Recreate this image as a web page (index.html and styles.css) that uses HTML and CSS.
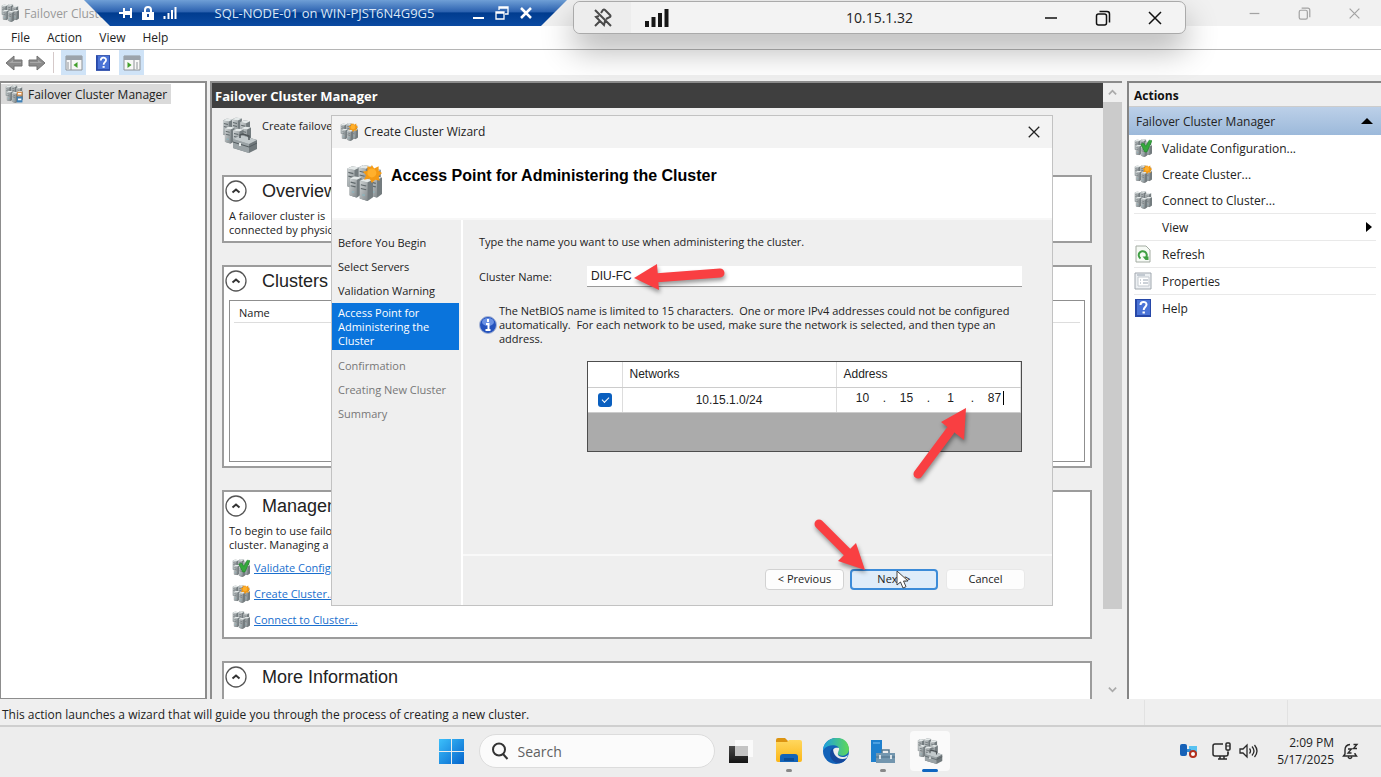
FILE: index.html
```html
<!DOCTYPE html>
<html lang="en">
<head>
    <meta charset="UTF-8">
    <meta name="viewport" content="width=device-width, initial-scale=1.0">
    <title>Failover Cluster Manager</title>
    <link rel="stylesheet" href="styles.css">
</head>
<body>

<!-- shared icons -->
<svg class="sprite" aria-hidden="true">
  <defs>
    <linearGradient id="g-metal" x1="0" y1="0" x2="1" y2="1">
      <stop offset="0" stop-color="#d0d5d6"/><stop offset="1" stop-color="#82898c"/>
    </linearGradient>
    <linearGradient id="g-win" x1="0" y1="0" x2="1" y2="1">
      <stop offset="0" stop-color="#3cc0fb"/><stop offset="1" stop-color="#0564cc"/>
    </linearGradient>
    <linearGradient id="g-folder" x1="0" y1="0" x2="0" y2="1">
      <stop offset="0" stop-color="#ffd75e"/><stop offset="1" stop-color="#fbb617"/>
    </linearGradient>
    <linearGradient id="g-edge" x1="0" y1="0" x2="1" y2="0">
      <stop offset="0" stop-color="#1b9de2"/><stop offset="1" stop-color="#5fd957"/>
    </linearGradient>
    <linearGradient id="g-black" x1="0" y1="0" x2="0" y2="1">
      <stop offset="0" stop-color="#4a4a4a"/><stop offset="1" stop-color="#141414"/>
    </linearGradient>

    <symbol id="i-server" viewBox="0 0 10 18" preserveAspectRatio="none">
      <path d="M0 2l4-2 6 1v14l-4 3-6-2z" fill="#747c7f"/>
      <path d="M0 2l6 1v15l-6-2z" fill="url(#g-metal)"/>
      <path d="M0 2l4-2 6 1-4 2z" fill="#e4e9e9"/>
      <path d="M1 5l4 1M1 8l4 1" stroke="#5f686b" stroke-width="1"/>
      <path d="M2 13l2 .5" stroke="#8fb3bb" stroke-width="1.4"/>
    </symbol>

    <symbol id="i-cluster" viewBox="0 0 32 32">
      <use href="#i-server" x="1" y="1" width="11" height="20"/>
      <use href="#i-server" x="11" y="0" width="11" height="20"/>
      <use href="#i-server" x="20" y="3" width="11" height="20"/>
      <use href="#i-server" x="3" y="10" width="11" height="19"/>
      <use href="#i-server" x="21" y="10" width="11" height="19"/>
      <use href="#i-server" x="12" y="12" width="12" height="20"/>
    </symbol>

    <symbol id="i-cluster-new" viewBox="0 0 32 32">
      <use href="#i-cluster" width="32" height="32"/>
      <path d="M23 0l2 3 4-2v4l3 2-3 3 1 4-4-1-3 3-2-4-5 1 2-4-3-3 4-1 0-4 3 1z" fill="#f49a14"/>
      <circle cx="23" cy="7" r="4" fill="#ffb02c"/>
    </symbol>

    <symbol id="i-cluster-ok" viewBox="0 0 32 32">
      <use href="#i-cluster" width="32" height="32"/>
      <path d="M12 9l5-2 4 6L27 2l5 1-9 20h-4z" fill="#35a83c" stroke="#1d7c28" stroke-width="1"/>
    </symbol>

    <symbol id="i-cluster-tree" viewBox="0 0 32 32">
      <use href="#i-cluster" width="32" height="32"/>
      <path d="M21 12h10v7H21z" fill="#d9914d"/><path d="M21 21h10v10H21z" fill="#3d7fb5"/>
      <path d="M23 14h6v3h-6zM23 24h6v3h-6z" fill="#fff"/>
    </symbol>

    <symbol id="i-cluster-tool" viewBox="0 0 36 36">
      <use href="#i-cluster" width="29" height="30"/>
      <path d="M11 22l8-4 16 5v9l-8 4-16-5z" fill="#71797c"/>
      <path d="M11 22l16 5v9l-16-5z" fill="#9ba3a6"/>
      <path d="M11 22l8-4 16 5-8 4z" fill="#c3cacc"/>
      <path d="M18 21v-3l3-1 6 2v4" fill="none" stroke="#4f5558" stroke-width="1.5"/>
      <path d="M11 25l16 5 8-4" fill="none" stroke="#555d60" stroke-width="1"/>
      <path d="M18 26v3" stroke="#e8ecec" stroke-width="2"/>
    </symbol>

    <symbol id="i-help" viewBox="0 0 16 18">
      <path d="M0 0h16v18H0z" fill="#2748a8"/><path d="M2 1h13v15H2z" fill="#4a73d6"/>
      <path d="M5.500 6c0-4 6-4 6-.5 0 2.500-2.800 2.500-2.800 5.500" fill="none" stroke="#fff" stroke-width="2"/>
      <path d="M7.500 12.500h2.400v2H7.500z" fill="#fff"/>
    </symbol>

    <symbol id="i-back" viewBox="0 0 18 16">
      <path d="M1 8l8-7v4h8v6H9v4z" fill="#8c8c8c" stroke="#737373" stroke-width="1"/>
      <path d="M4 8l4-3v2h8v1z" fill="#a9a9a9"/>
    </symbol>

    <symbol id="i-max" viewBox="0 0 16 16">
      <rect x="1.500" y="4" width="10" height="11" rx="2" fill="none" stroke="currentColor" stroke-width="1.500"/>
      <path d="M4.500 1.500H12a2.500 2.500 0 0 1 2.500 2.500v8.500" fill="none" stroke="currentColor" stroke-width="1.500"/>
    </symbol>
    <symbol id="i-min" viewBox="0 0 16 16"><path d="M2 8h12" stroke="currentColor" stroke-width="1.500"/></symbol>
    <symbol id="i-close" viewBox="0 0 16 16"><path d="M2 2l12 12M14 2L2 14" stroke="currentColor" stroke-width="1.500"/></symbol>

    <symbol id="i-chevron" viewBox="0 0 22 22">
      <circle cx="11" cy="11" r="10" fill="#fff" stroke="#555" stroke-width="1.300"/>
      <path d="M7.500 12.500L11 9.500l3.500 3" fill="none" stroke="#333" stroke-width="2"/>
    </symbol>
  </defs>
</svg>

<header class="titlebar">
  <svg class="icon18"><use href="#i-cluster"/></svg>
  <h1>Failover Cluster Manager</h1>
  <div class="win-buttons faded">
    <button type="button" aria-label="Minimize"><svg><use href="#i-min"/></svg></button>
    <button type="button" aria-label="Restore"><svg><use href="#i-max"/></svg></button>
    <button type="button" aria-label="Close"><svg><use href="#i-close"/></svg></button>
  </div>
</header>

<nav class="menubar">
  <button type="button">File</button>
  <button type="button">Action</button>
  <button type="button">View</button>
  <button type="button">Help</button>
</nav>

<div class="toolbar">
  <button type="button" aria-label="Back"><svg width="18" height="16"><use href="#i-back"/></svg></button>
  <button type="button" aria-label="Forward" class="forward"><svg width="18" height="16"><use href="#i-back"/></svg></button>
  <span class="tool-sep"></span>
  <button type="button" class="pressed" aria-label="Show tree">
    <svg width="18" height="16" viewBox="0 0 18 16"><path d="M1 1h16v14H1z" fill="#f7f7f7" stroke="#8f9499"/><path d="M1 1h16v4H1z" fill="#9ba3ab"/><path d="M6 5v10M3 7v7" stroke="#8f9499"/><path d="M12.500 7v6L8.500 10z" fill="#43a02c"/></svg>
  </button>
  <button type="button" class="help" aria-label="Help"><svg width="14" height="18"><use href="#i-help"/></svg></button>
  <button type="button" class="pressed" aria-label="Show actions">
    <svg width="18" height="16" viewBox="0 0 18 16"><path d="M1 1h16v14H1z" fill="#f7f7f7" stroke="#8f9499"/><path d="M1 1h16v4H1z" fill="#9ba3ab"/><path d="M11 5v10M14 7v7" stroke="#8f9499"/><path d="M4.500 7v6l4-3z" fill="#43a02c"/></svg>
  </button>
</div>

<main class="console">

  <aside class="tree">
    <a class="tree-item" href="#"><svg class="icon18"><use href="#i-cluster-tree"/></svg>Failover Cluster Manager</a>
  </aside>

  <section class="center">
    <div class="pane">
      <h2 class="pane-title">Failover Cluster Manager</h2>
      <div class="pane-body">
        <div class="intro">
          <svg width="36" height="36"><use href="#i-cluster-tool"/></svg>
          <p>Create failover</p>
        </div>

        <article class="box overview">
          <h3><button type="button" aria-label="Collapse"><svg><use href="#i-chevron"/></svg></button>Overview</h3>
          <p>A failover cluster is<br>connected by physical</p>
        </article>

        <article class="box clusters">
          <h3><button type="button" aria-label="Collapse"><svg><use href="#i-chevron"/></svg></button>Clusters</h3>
          <div class="list">
            <div class="list-head">Name</div>
          </div>
        </article>

        <article class="box management">
          <h3><button type="button" aria-label="Collapse"><svg><use href="#i-chevron"/></svg></button>Management</h3>
          <p>To begin to use failover<br>cluster. Managing a</p>
          <ul>
            <li><svg class="icon18"><use href="#i-cluster-ok"/></svg><a href="#">Validate Configuration...</a></li>
            <li><svg class="icon18"><use href="#i-cluster-new"/></svg><a href="#">Create Cluster...</a></li>
            <li><svg class="icon18"><use href="#i-cluster"/></svg><a href="#">Connect to Cluster...</a></li>
          </ul>
        </article>

        <article class="box more">
          <h3><button type="button" aria-label="Collapse"><svg><use href="#i-chevron"/></svg></button>More Information</h3>
        </article>
      </div>
    </div>
    <div class="scrollbar">
      <svg viewBox="0 0 10 6"><path d="M1 5l4-4 4 4" fill="none" stroke="#aaa" stroke-width="2"/></svg>
      <div class="thumb"></div>
      <svg viewBox="0 0 10 6"><path d="M1 1l4 4 4-4" fill="none" stroke="#aaa" stroke-width="2"/></svg>
    </div>
  </section>

  <aside class="actions">
    <h2>Actions</h2>
    <h3>Failover Cluster Manager <svg width="12" height="6" viewBox="0 0 12 6"><path d="M0 6l6-6 6 6z"/></svg></h3>
    <ul>
      <li><button type="button"><svg class="icon18"><use href="#i-cluster-ok"/></svg>Validate Configuration...</button></li>
      <li><button type="button"><svg class="icon18"><use href="#i-cluster-new"/></svg>Create Cluster...</button></li>
      <li><button type="button"><svg class="icon18"><use href="#i-cluster"/></svg>Connect to Cluster...</button></li>
      <li class="line"><button type="button"><span class="icon18"></span>View <svg class="more-arrow" width="6" height="10" viewBox="0 0 6 10"><path d="M0 0l6 5-6 5z"/></svg></button></li>
      <li class="line"><button type="button"><svg class="icon18" viewBox="0 0 18 18"><path d="M2 1h10l4 4v12H2z" fill="#f6faf5" stroke="#a3aba2"/><path d="M6.500 13.500A4 4 0 1 1 12 12.500" fill="none" stroke="#3f9f43" stroke-width="2"/><path d="M8.500 11.500h6v3.500h-3z" fill="#3f9f43"/></svg>Refresh</button></li>
      <li class="line"><button type="button"><svg class="icon18" viewBox="0 0 18 18"><path d="M1 1h16v16H1z" fill="#eceff2" stroke="#a0a7ae"/><path d="M4 5h11v9H4z" fill="#fff" stroke="#c3c9cf"/><path d="M3 3h8M6 8h1M9 8h5M6 11h1M9 11h5" stroke="#98a3b0"/></svg>Properties</button></li>
      <li class="line"><button type="button"><svg class="icon18"><use href="#i-help"/></svg>Help</button></li>
    </ul>
  </aside>
</main>

<footer class="status">
  <span>This action launches a wizard that will guide you through the process of creating a new cluster.</span>
  <i></i><i></i>
</footer>

<!-- taskbar -->
<div class="taskbar">
  <div class="apps">
    <button type="button" aria-label="Start">
      <svg width="26" height="26" viewBox="0 0 26 26"><path d="M0 1h12v12H0zM13 1h12v12H13zM0 14h12v12H0zM13 14h12v12H13z" fill="url(#g-win)"/></svg>
    </button>
    <label class="search">
      <svg width="18" height="18" viewBox="0 0 18 18"><circle cx="8" cy="7.500" r="6" fill="none" stroke="#333" stroke-width="2"/><path d="M12 12l4.500 5" stroke="#333" stroke-width="2"/></svg>
      <input type="text" placeholder="Search" aria-label="Search">
    </label>
    <button type="button" aria-label="Task view">
      <svg width="26" height="26" viewBox="0 0 26 26"><path d="M6 2h18v17H6z" fill="#fafafa"/><path d="M0 8h19v17H0z" fill="url(#g-black)"/><path d="M6 8h13v10H6z" fill="#c4c4c4"/></svg>
    </button>
    <button type="button" class="open" aria-label="File Explorer">
      <svg width="26" height="26" viewBox="0 0 26 26"><path d="M0 2q0-2 2-2h7l3 3v4H0z" fill="#dc9411"/><path d="M0 4h11l2-2h11q2 0 2 2v18q0 2-2 2H2q-2 0-2-2z" fill="url(#g-folder)"/><path d="M4 24v-5q0-3 3-3h12q3 0 3 3v5z" fill="#1464b9"/><path d="M8 20h10v3H8z" fill="#0c4d96"/></svg>
    </button>
    <button type="button" aria-label="Edge">
      <svg width="26" height="26" viewBox="0 0 26 26"><circle cx="13" cy="13" r="13" fill="#1262b8"/><path d="M0 12C1-3 25-5 26 11c0 6-6 8-10 6-3-2 0-3 0-6 0-4-10-6-16 1z" fill="url(#g-edge)"/><path d="M9 15c0-4 3-6 7-5 1 3-3 5 0 8 3 2 7 1 9-1l-2 4c-6 4-14 1-14-6z" fill="#ededed"/><path d="M10 10c-6 5-2 14 5 15 4 0 7-2 9-5-7 3-14-1-14-10z" fill="#15489b"/></svg>
    </button>
    <button type="button" class="open" aria-label="Server Manager">
      <svg width="26" height="26" viewBox="0 0 26 26"><path d="M1 2h11v22H1z" fill="#1e80ce"/><path d="M3 5h7" stroke="#7cc0f2"/><path d="M12 15v-3h7v3" fill="none" stroke="#56788f" stroke-width="1.500"/><path d="M6 15h19v10H6z" fill="#7396ae"/><path d="M6 19h19" stroke="#4f7188"/><path d="M10 17v4M21 17v4" stroke="#fff" stroke-width="1.500"/></svg>
    </button>
    <button type="button" class="active" aria-label="Failover Cluster Manager">
      <svg width="26" height="26"><use href="#i-cluster-tool"/></svg>
    </button>
  </div>
  <div class="tray">
    <svg width="19" height="16" viewBox="0 0 19 16"><path d="M10 3h8v9h-8z" fill="#58c2f1"/><path d="M7 6h5v3H7z" fill="#2f8ed8"/><rect x="1" y="1" width="7" height="12" rx="2" fill="#1661b7"/><circle cx="14" cy="11" r="3" fill="#fff" stroke="#b3301d" stroke-width="2"/></svg>
    <svg width="19" height="19" viewBox="0 0 19 19"><path d="M11 2H3Q1 2 1 4v8q0 2 2 2h11q2 0 2-2v-2M6 17h9M8 14v3M12 14v3" fill="none" stroke="#2a2a2a" stroke-width="1.500"/><rect x="14" y="1" width="4" height="7" rx="1" fill="none" stroke="#2a2a2a" stroke-width="1.500"/><path d="M14 4h4M16 8v4" stroke="#2a2a2a"/></svg>
    <svg width="19" height="18" viewBox="0 0 19 18"><path d="M1 7h3l4-4v12l-4-4H1z" fill="none" stroke="#2a2a2a" stroke-width="1.300"/><path d="M10.500 6.500q2 2.500 0 5M13 4.500q4 4.500 0 9M15.500 3q5 6 0 12" fill="none" stroke="#2a2a2a" stroke-width="1.300"/></svg>
    <time>2:09 PM<br>5/17/2025</time>
    <svg width="18" height="18" viewBox="0 0 18 18"><path d="M8 2.500Q3 3 3 8v4l-1.500 2h13L13 12v-1M6 15q2 3 4 0" fill="none" stroke="#2a2a2a" stroke-width="1.400"/><path d="M6 7h3.500L6 11h3.500M11.500 2.500h3.500l-3.500 4H15" fill="none" stroke="#2a2a2a" stroke-width="1.300"/></svg>
  </div>
</div>

<!-- console session bar -->
<div class="vm-bar">
  <div class="vm-left">
    <svg width="14" height="12" viewBox="0 0 14 12"><path d="M0 6h5M5 1v10M5 6h7M12 1v10" fill="none" stroke="#fff" stroke-width="2"/><path d="M6 4h6v4H6z" fill="#fff"/></svg>
    <svg width="12" height="14" viewBox="0 0 12 14"><path d="M3 7V4q0-3 3-3t3 3v3" fill="none" stroke="#fff" stroke-width="2"/><path d="M0 6h12v8H0z" fill="#fff"/><path d="M6 8v3" stroke="#16499b" stroke-width="2"/></svg>
    <svg width="14" height="12" viewBox="0 0 14 12"><path d="M1.500 9v3M5.500 6v6M9 3v9M12.500 0v12" stroke="#fff" stroke-width="2"/></svg>
  </div>
  <span>SQL-NODE-01 on WIN-PJST6N4G9G5</span>
  <div class="vm-right">
    <button type="button" aria-label="Minimize"><svg width="12" height="14" viewBox="0 0 12 14"><path d="M1 12h11" stroke="#fff" stroke-width="2"/></svg></button>
    <button type="button" aria-label="Restore"><svg width="14" height="14" viewBox="0 0 14 14"><path d="M4 4V1h9v7h-3M1 6h8v7H1zM4 2h9M1 7h8" fill="none" stroke="#fff" stroke-width="1.300"/></svg></button>
    <button type="button" aria-label="Close"><svg width="12" height="14" viewBox="0 0 12 14"><path d="M1 2l10 10M11 2L1 12" stroke="#fff" stroke-width="2.500"/></svg></button>
  </div>
</div>

<!-- remote connection bar -->
<div class="rdp-bar">
  <button type="button" class="pin" aria-label="Unpin"><svg width="20" height="20" viewBox="0 0 20 20"><path d="M2 2l16 16M7 13l-5 5M6 8l-3 1 8 8 1-4M8 5l2-3q1-1 2 0l5 5q1 1 0 2l-4 2" fill="none" stroke="#4a4a4a" stroke-width="2"/></svg></button>
  <svg class="signal" width="26" height="18" viewBox="0 0 26 18"><path d="M3 12v6M9.500 8v10M16 4v14M22.500 0v18" stroke="#161616" stroke-width="4"/></svg>
  <span>10.15.1.32</span>
  <div class="win-buttons">
    <button type="button" aria-label="Minimize"><svg><use href="#i-min"/></svg></button>
    <button type="button" aria-label="Restore"><svg><use href="#i-max"/></svg></button>
    <button type="button" aria-label="Close"><svg><use href="#i-close"/></svg></button>
  </div>
</div>

<!-- wizard -->
<form class="wizard">
  <div class="wizard-title">
    <svg class="icon18"><use href="#i-cluster-new"/></svg>
    <span>Create Cluster Wizard</span>
    <button type="button" aria-label="Close"><svg width="14" height="14"><use href="#i-close"/></svg></button>
  </div>
  <div class="wizard-head">
    <svg width="36" height="36"><use href="#i-cluster-new"/></svg>
    <h2>Access Point for Administering the Cluster</h2>
  </div>
  <div class="wizard-body">
    <ol class="steps">
      <li>Before You Begin</li>
      <li>Select Servers</li>
      <li>Validation Warning</li>
      <li class="current">Access Point for Administering the Cluster</li>
      <li class="todo">Confirmation</li>
      <li class="todo">Creating New Cluster</li>
      <li class="todo">Summary</li>
    </ol>
    <div class="page">
      <div class="page-main">
        <p>Type the name you want to use when administering the cluster.</p>
        <div class="field">
          <label for="cluster-name">Cluster Name:</label>
          <input type="text" id="cluster-name" value="DIU-FC">
        </div>
        <div class="info">
          <svg width="18" height="18" viewBox="0 0 18 18"><circle cx="9" cy="9" r="8.500" fill="#2553bd" stroke="#a8b6d4"/><ellipse cx="9" cy="6" rx="6" ry="4" fill="#6b92e4"/><path d="M9 3v3M7 8h2.500v6M6.500 14h5" stroke="#fff" stroke-width="2" fill="none"/></svg>
          <p>The NetBIOS name is limited to 15 characters.&nbsp; One or more IPv4 addresses could not be configured automatically.&nbsp; For each network to be used, make sure the network is selected, and then type an address.</p>
        </div>
        <div class="grid">
          <table>
            <tr><th class="tick"></th><th class="net">Networks</th><th>Address</th></tr>
            <tr>
              <td class="tick"><input type="checkbox" checked aria-label="Use 10.15.1.0/24"></td>
              <td class="net">10.15.1.0/24</td>
              <td class="addr">
                <div class="ip">
                  <input type="text" value="10" aria-label="Octet 1"><b>.</b>
                  <input type="text" value="15" aria-label="Octet 2"><b>.</b>
                  <input type="text" value="1" aria-label="Octet 3"><b>.</b>
                  <input type="text" value="87" aria-label="Octet 4"><i class="caret"></i>
                </div>
              </td>
            </tr>
          </table>
        </div>
      </div>
      <div class="page-buttons">
        <button type="button">&lt; Previous</button>
        <button type="submit" class="next">Next &gt;</button>
        <button type="button" class="cancel">Cancel</button>
      </div>
    </div>
  </div>

  <svg class="arrow arrow-name" width="96" height="36" viewBox="0 0 96 36"><path d="M22 15l66-5" stroke="#f93f42" stroke-width="9" stroke-linecap="round"/><path d="M2 15L25 1l2 26z" fill="#f93f42"/></svg>
  <svg class="arrow arrow-ip" width="60" height="76" viewBox="0 0 60 76"><path d="M7 68l32-43" stroke="#f93f42" stroke-width="9" stroke-linecap="round"/><path d="M55 2L30 16l23 18z" fill="#f93f42"/></svg>
  <svg class="arrow arrow-next" width="60" height="60" viewBox="0 0 60 60"><path d="M7 8l31 31" stroke="#f93f42" stroke-width="9" stroke-linecap="round"/><path d="M53 54L26 45l18-18z" fill="#f93f42"/></svg>
  <svg class="cursor" width="14" height="20" viewBox="0 0 14 20"><path d="M1 1v14l3.500-3 2.500 6 3-1.300-2.500-5.700H12z" fill="#fff" stroke="#444"/></svg>
</form>

</body>
</html>
```
FILE: styles.css
```css
* {
  box-sizing: border-box;
}

body {
  margin: 0;
  height: 100vh;
  display: flex;
  flex-direction: column;
  overflow: hidden;
  position: relative;
  background: #efefef;
  color: #222;
  font-family: "Open Sans", "Noto Sans", sans-serif;
  font-size: 12px;
}

h1, h2, h3, p, ul, ol {
  margin: 0;
  padding: 0;
  font-weight: normal;
}

ul, ol {
  list-style: none;
}

button, input {
  font: inherit;
  color: inherit;
  border: 0;
  padding: 0;
  background: none;
}

button svg {
  display: block;
}

.sprite {
  position: absolute;
  width: 0;
  height: 0;
}

.icon18 {
  width: 18px;
  height: 18px;
  flex: none;
}

/* main window */

.titlebar {
  height: 26px;
  display: flex;
  align-items: center;
  gap: 5px;
  padding-left: 1px;
  background: #f1f1f1;
}

.titlebar h1 {
  font-size: 12px;
  color: #999;
}

.win-buttons {
  margin-left: auto;
  display: flex;
}

.win-buttons button {
  width: 52px;
  display: flex;
  justify-content: center;
}

.win-buttons svg {
  width: 16px;
  height: 16px;
}

.faded {
  padding-right: 2px;
  color: #a3a3a3;
}

.faded button {
  width: 50px;
}

.faded svg {
  width: 13px;
  height: 13px;
}

.menubar {
  height: 24px;
  display: flex;
  align-items: center;
  gap: 17px;
  padding-left: 11px;
  background: #fff;
  border-bottom: 1px solid #b5b5b5;
}

.toolbar {
  height: 25px;
  display: flex;
  align-items: stretch;
  padding-left: 4px;
  background: #fff;
}

.toolbar button {
  width: 25px;
  display: flex;
  align-items: center;
  justify-content: center;
}

.toolbar button:first-child {
  width: 20px;
}

.forward svg {
  transform: scaleX(-1);
}

.tool-sep {
  width: 1px;
  margin: 2px 7px 2px 4px;
  background: #d5c9c9;
}

.toolbar .pressed {
  background: #cfe3f7;
}

.toolbar .help {
  width: 33px;
}

.console {
  flex: 1;
  min-height: 0;
  display: flex;
  padding-top: 6px;
}

.tree {
  width: 207px;
  margin-right: 3px;
  background: #fff;
  border: solid #8d8d8d;
  border-width: 2px 2px 1px 1px;
}

.tree-item {
  display: inline-flex;
  align-items: center;
  gap: 5px;
  height: 20px;
  margin-top: 1px;
  padding: 0 4px;
  background: #dadada;
  color: #222;
  text-decoration: none;
}

.center {
  flex: 1;
  min-width: 0;
  display: flex;
  border-top: 2px solid #8d8d8d;
  border-left: 2px solid #8d8d8d;
}

.pane {
  flex: 1;
  min-width: 0;
  display: flex;
  flex-direction: column;
  font-size: 11px;
}

.pane-title {
  height: 25px;
  flex: none;
  padding-left: 3px;
  background: #3f3f3f;
  color: #fff;
  font-size: 13px;
  font-weight: bold;
  line-height: 27px;
}

.pane-body {
  flex: 1;
  min-height: 0;
  overflow: hidden;
  display: flex;
  flex-direction: column;
  gap: 22px;
  padding: 9px 11px 0 10px;
}

.intro {
  display: flex;
  gap: 4px;
  height: 36px;
  flex: none;
}

.intro p {
  line-height: 18px;
  white-space: nowrap;
}

.box {
  flex: none;
  padding: 2px 5px;
  background: #fff;
  border: 2px solid #9c9c9c;
  line-height: 14px;
}

.box p {
  white-space: nowrap;
}

.box h3 {
  height: 24px;
  display: flex;
  align-items: center;
  gap: 15px;
  margin-left: -4px;
  font-family: "Liberation Sans", Arial, sans-serif;
  font-size: 18px;
}

.box h3 svg {
  width: 22px;
  height: 22px;
}

.overview {
  height: 68px;
}

.overview p, .management p {
  margin-top: 6px;
}

.clusters {
  height: 203px;
}

.list {
  height: 162px;
  margin-top: 7px;
  border: 1px solid #8f8f8f;
}

.list-head {
  height: 22px;
  margin: 0 4px;
  padding-left: 5px;
  line-height: 23px;
  border-bottom: 1px solid #ddd;
}

.management {
  height: 149px;
}

.management ul {
  margin-top: 3px;
}

.management li {
  height: 26px;
  display: flex;
  align-items: center;
  gap: 4px;
  padding-left: 3px;
}

.management a {
  color: #1a6fce;
}

.more {
  height: 80px;
}

.scrollbar {
  width: 19px;
  display: flex;
  flex-direction: column;
  align-items: center;
  justify-content: space-between;
  background: #efefef;
}

.scrollbar svg {
  width: 9px;
  height: 19px;
}

.thumb {
  width: 19px;
  flex: 0 1 507px;
  margin-bottom: auto;
  background: #cbcbcb;
}

.actions {
  width: 254px;
  margin-left: 5px;
  background: #fff;
  border-top: 2px solid #858585;
  border-left: 2px solid #858585;
}

.actions h2 {
  height: 24px;
  padding-left: 5px;
  background: #efefef;
  border-bottom: 1px solid #ccc;
  font-size: 12px;
  font-weight: bold;
  line-height: 26px;
  color: #111;
}

.actions h3 {
  height: 28px;
  display: flex;
  align-items: center;
  justify-content: space-between;
  padding: 0 8px 0 7px;
  background: linear-gradient(#bcd0e8, #9cb9da);
  font-size: 12px;
}

.actions li {
  padding: 0 5px;
}

.actions li.line::before {
  content: "";
  display: block;
  height: 1px;
  background: #e9e9e9;
}

.actions button {
  width: 100%;
  height: 26px;
  display: flex;
  align-items: center;
  gap: 10px;
}

.more-arrow {
  margin-left: auto;
  margin-right: 4px;
}

.status {
  height: 27px;
  display: flex;
  margin-top: 1px;
  padding-left: 2px;
  line-height: 30px;
  border-bottom: 2px solid #cfcfcf;
}

.status span {
  flex: 1;
}

.status i {
  width: 143px;
  border-left: 1px solid #e2e2e2;
}

.status i:last-child {
  width: 94px;
}

/* taskbar */

.taskbar {
  height: 50px;
  flex: none;
  display: grid;
  grid-template-columns: 1fr auto 1fr;
  align-items: center;
  padding-bottom: 2px;
  background: #ededed;
}

.apps {
  grid-column: 2;
  display: flex;
  align-items: center;
  gap: 7px;
}

.apps button {
  position: relative;
  width: 40px;
  height: 40px;
  display: flex;
  align-items: center;
  justify-content: center;
  border-radius: 4px;
}

.apps .active {
  background: #fafafa;
}

.apps .open::after, .apps .active::after {
  content: "";
  position: absolute;
  bottom: -1px;
  width: 6px;
  height: 3px;
  border-radius: 2px;
  background: #888;
}

.apps .active::after {
  width: 16px;
  background: #0f66c0;
}

.search {
  width: 236px;
  height: 34px;
  display: flex;
  align-items: center;
  gap: 9px;
  padding-left: 11px;
  background: #fbfbfb;
  border: 1px solid #dcdcdc;
  border-radius: 17px;
}

.search input {
  width: 160px;
  font-size: 14px;
  outline: 0;
}

.search input::placeholder {
  color: #606060;
}

.tray {
  display: flex;
  align-items: center;
  justify-content: flex-end;
  gap: 8px;
  padding-right: 21px;
}

.tray svg:first-child {
  margin-right: 6px;
}

.tray time {
  width: 68px;
  text-align: right;
  line-height: 17px;
}

/* bars over the top edge */

.vm-bar {
  position: absolute;
  top: 0;
  left: 84px;
  width: 483px;
  height: 26px;
  display: flex;
  align-items: center;
  justify-content: space-between;
  padding: 0 35px;
  background: linear-gradient(#6f9fd6, #2c62b0 45%, #003c8f 50%, #0b4aa2);
  clip-path: polygon(0 0, 100% 0, 457px 100%, 26px 100%);
  color: #d9e6f6;
}

.vm-bar span {
  font-size: 13px;
}

.vm-left, .vm-right {
  display: flex;
  align-items: center;
  gap: 9px;
}

.vm-right {
  gap: 11px;
}

.rdp-bar {
  position: absolute;
  top: 1px;
  left: 573px;
  width: 613px;
  height: 33px;
  display: flex;
  align-items: center;
  background: #f3f3f3;
  border: 1px solid #aaa;
  border-radius: 7px;
  box-shadow: 0 16px 32px rgba(0, 0, 0, 0.3);
}

.rdp-bar .pin {
  width: 57px;
  height: 31px;
  display: flex;
  align-items: center;
  justify-content: center;
  background: #ededed;
  border-radius: 7px 0 0 7px;
}

.signal {
  margin-left: 13px;
}

.rdp-bar span {
  flex: 1;
  padding-left: 64px;
  text-align: center;
  font-size: 14px;
}

.rdp-bar .win-buttons {
  padding-right: 4px;
  color: #111;
}

/* wizard dialog */

.wizard {
  position: absolute;
  top: 115px;
  left: 331px;
  width: 722px;
  display: flex;
  flex-direction: column;
  background: #efefef;
  border: 1px solid #c2c2c2;
  font-size: 11px;
  line-height: 14px;
}

.wizard-title {
  height: 32px;
  display: flex;
  align-items: center;
  gap: 6px;
  padding: 0 11px 0 8px;
  background: #f3f3f3;
  font-size: 12px;
}

.wizard-title button {
  margin-left: auto;
}

.wizard-head {
  display: flex;
  gap: 9px;
  height: 70px;
  padding: 17px 14px;
  background: #fff;
}

.wizard-head h2 {
  font-family: "Liberation Sans", Arial, sans-serif;
  font-size: 16px;
  font-weight: bold;
  line-height: 22px;
  color: #000;
}

.wizard-body {
  display: flex;
  height: 387px;
  border-top: 2px solid #f7f7f7;
}

.steps {
  width: 131px;
  padding: 11px 2px 0 0;
  border-right: 2px solid #fff;
}

.steps li {
  padding: 5px 6px;
}

.steps .current {
  padding: 3px 20px 2px 6px;
  margin-bottom: 4px;
  background: #0a74dc;
  color: #fff;
}

.steps .todo {
  color: #777;
}

.page {
  flex: 1;
  display: flex;
  flex-direction: column;
}

.page-main {
  flex: 1;
  padding: 15px 30px 0 16px;
}

.field {
  display: flex;
  align-items: center;
  margin-top: 17px;
}

.field label {
  width: 108px;
}

.field input {
  flex: 1;
  height: 21px;
  padding-left: 4px;
  background: #fff;
  border-bottom: 1px solid #999;
  font-family: "Liberation Sans", Arial, sans-serif;
  font-size: 12px;
}

.info {
  display: flex;
  align-items: center;
  gap: 2px;
  margin-top: 17px;
}

.info svg {
  flex: none;
}

.grid {
  height: 91px;
  margin: 15px 0 0 108px;
  background: #ababab;
  border: 1px solid #4d4d4d;
  font-family: "Liberation Sans", Arial, sans-serif;
  font-size: 12px;
}

.grid table {
  width: 100%;
  table-layout: fixed;
  border-collapse: collapse;
  background: #fff;
}

.grid th, .grid td {
  height: 25px;
  padding: 0;
  font-weight: normal;
  text-align: left;
  border-right: 1px solid #ddd;
  border-bottom: 1px solid #ccc;
}

.grid th {
  padding-left: 7px;
}

.grid .tick {
  width: 34px;
  padding: 0;
  text-align: center;
}

.grid .net {
  width: 214px;
}

.grid td.net {
  text-align: center;
}

.grid input[type="checkbox"] {
  appearance: none;
  display: block;
  width: 14px;
  height: 14px;
  margin: 0 auto;
  border-radius: 3px;
  background: #0a5fbf;
  position: relative;
}

.grid input[type="checkbox"]::after {
  content: "";
  position: absolute;
  left: 4px;
  top: 4px;
  width: 6px;
  height: 3px;
  border: solid #fff;
  border-width: 0 0 1px 1px;
  transform: rotate(-45deg);
}

.ip {
  position: relative;
  display: flex;
  padding: 0 0 3px 8px;
}

.ip input {
  width: 36px;
  text-align: center;
}

.ip b {
  width: 8px;
  text-align: center;
  font-weight: normal;
}

.caret {
  position: absolute;
  left: 166px;
  top: 0;
  width: 1px;
  height: 14px;
  background: #000;
}

.page-buttons {
  height: 51px;
  display: flex;
  align-items: center;
  justify-content: flex-end;
  gap: 6px;
  padding: 0 27px 3px 0;
  border-top: 2px solid #f9f9f9;
}

.page-buttons button {
  width: 79px;
  height: 21px;
  background: #fdfdfd;
  border: 1px solid #d2d2d2;
  border-radius: 4px;
}

.page-buttons .next {
  width: 88px;
  background: #dfecf9;
  border: 2px solid #3c8bd8;
}

.page-buttons .cancel {
  margin-left: 2px;
  border-color: #e8e8e8;
}

/* pointers laid over the dialog */

.arrow {
  position: absolute;
  filter: drop-shadow(1px 3px 2px rgba(0, 0, 0, 0.4));
}

.arrow-name {
  left: 300px;
  top: 147px;
}

.arrow-ip {
  left: 579px;
  top: 290px;
}

.arrow-next {
  left: 480px;
  top: 400px;
}

.cursor {
  position: absolute;
  left: 564px;
  top: 454px;
}
```
